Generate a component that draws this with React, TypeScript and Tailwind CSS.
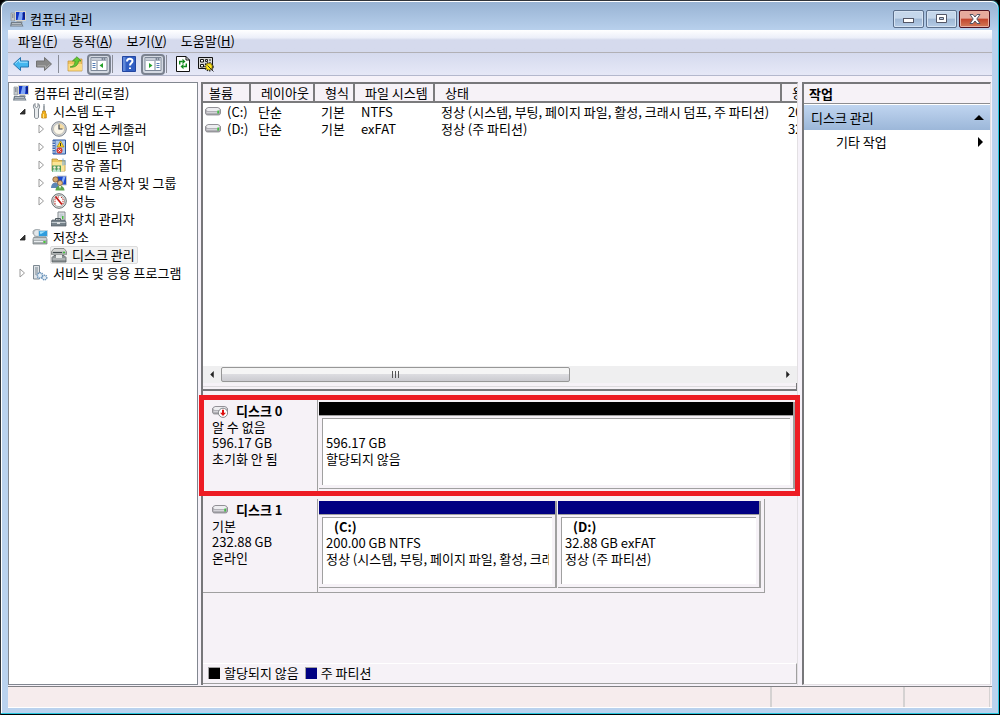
import type { ReactNode } from 'react'
import clsx from 'clsx'

function Icon({ children, className }: { children: ReactNode; className?: string }) {
  return (
    <svg viewBox="0 0 16 16" className={clsx('size-4 shrink-0', className)} aria-hidden>
      {children}
    </svg>
  )
}

function ComputerIcon() {
  return (
    <Icon>
      <path d="M5 0h11v10H5z" fill="#d9d6cc" />
      <path d="M6 1h9v8H6z" fill="#1237c4" />
      <path d="M9.500 1h3.500l-1 8H7.500z" fill="#7fa5f5" />
      <path d="M12.500 2H15v6h-1.500z" fill="#0b1f8c" />
      <path d="M1 2h3.500v8H1z" fill="#c3c8cd" stroke="#8b9299" strokeWidth=".7" />
      <path d="M2 4h1.500M2 6h1.500" stroke="#5d666e" />
      <path d="M7 10h5l1 2H5z" fill="#a1a7ac" />
      <path d="M1 11h10.500l2 4.500H0z" fill="#717d88" />
      <path d="M2 12.500h9M1.500 14.200h10.500" stroke="#c9d0d6" strokeWidth=".8" />
    </Icon>
  )
}

function ToolsIcon() {
  return (
    <Icon>
      <path d="M3 .5v3l1.500 1L6 3.500v-3c2 1 2 4.500.5 5.500V14c0 2-4 2-4 0V6C1 5 1 1.500 3 .5z" fill="#e8ebed" stroke="#737c83" strokeWidth=".9" />
      <path d="M12 1v7" stroke="#8a9299" strokeWidth="1.600" />
      <path d="M11 1h2v2h-2z" fill="#b8bec3" />
      <path d="M10.500 8h3v2l.8 1v4h-4.600v-4l.8-1z" fill="#f3b21a" stroke="#b87d08" strokeWidth=".7" />
      <path d="M11.500 11v4" stroke="#ffe28a" />
    </Icon>
  )
}

function ClockIcon() {
  return (
    <Icon>
      <circle cx="8" cy="8" r="7.300" fill="#d3d6da" stroke="#80868d" />
      <circle cx="8" cy="8" r="5.500" fill="#fbf6e8" stroke="#a9a69b" strokeWidth=".6" />
      <path d="M8 8V2.600A5.400 5.400 0 0 1 13.400 8z" fill="#f5dca3" />
      <path d="M8 3.500V8h3.500" fill="none" stroke="#434a55" strokeWidth="1.200" />
    </Icon>
  )
}

function EventIcon() {
  return (
    <Icon>
      <path d="M2 1h12.500v14H2z" fill="#a9c6ea" stroke="#2d559c" />
      <path d="M2 1h2.500v14H2z" fill="#3e6bb5" />
      <path d="M1 3h3M1 5.500h3M1 8h3M1 10.500h3M1 13h3" stroke="#d9dee5" />
      <path d="m9.500 2 3.500 6H6z" fill="#ffd92e" stroke="#a98500" strokeWidth=".7" />
      <path d="M9.500 4v3" stroke="#333" />
      <circle cx="8.500" cy="11.500" r="3" fill="#d93a32" />
      <path d="m7.400 10.400 2.200 2.200m0-2.200-2.200 2.200" stroke="#fff" />
    </Icon>
  )
}

function SharedFolderIcon() {
  return (
    <Icon>
      <path d="M1 2h5l1.500 1.500H14V14H1z" fill="#ecc75d" stroke="#b08d35" strokeWidth=".8" />
      <path d="M1.500 5h12v9h-12z" fill="#fbe596" />
      <path d="M1 8.500h9V15H1z" fill="#4f9a5a" />
      <circle cx="3.500" cy="10.500" r="1.300" fill="#f8efd8" />
      <circle cx="7.500" cy="10.500" r="1.300" fill="#f8efd8" />
      <path d="M1.500 15c0-4 4-4 4 0M5.500 15c0-4 4-4 4 0" fill="#bfe3d0" />
      <path d="M12 1.500v7M14 3v5" stroke="#6fa6dc" />
    </Icon>
  )
}

function UsersIcon() {
  return (
    <Icon>
      <path d="M6 1h9.500v9H6z" fill="#1c49ca" stroke="#c9cac8" />
      <path d="M12 1.500h2.500L12 9h-2z" fill="#8cb0fa" />
      <circle cx="4.500" cy="4.500" r="2.700" fill="#d7a56b" stroke="#6d4a27" strokeWidth=".7" />
      <path d="M0 13c0-7 8-7 8 0z" fill="#5d86b5" />
      <circle cx="9" cy="8" r="2.500" fill="#e7bd88" stroke="#7d5528" strokeWidth=".7" />
      <path d="M4.500 15.500c0-6.500 9-6.500 9 0z" fill="#5ba64c" />
      <path d="m8 11 1 3 1-3z" fill="#fff" />
    </Icon>
  )
}

function PerformanceIcon() {
  return (
    <Icon>
      <circle cx="8" cy="8" r="7.300" fill="#e5e5e2" stroke="#666d70" />
      <circle cx="8" cy="8" r="5.600" fill="#fff" stroke="#939896" strokeWidth=".8" />
      <path d="M4 11.500V6l2-2h2M10 4l2 2v5" fill="none" stroke="#c52d24" strokeDasharray="1.500 .8" />
      <path d="m4.500 3.500 6.500 8" stroke="#c21b18" strokeWidth="1.800" />
    </Icon>
  )
}

function DeviceIcon() {
  return (
    <Icon>
      <path d="M7 1h7v9H7z" fill="#e5e7e8" stroke="#81888d" />
      <path d="M8.500 2.500h4v4h-4z" fill="#c1cbd2" />
      <path d="M11 5h1.500v3H11z" fill="#4bbb44" />
      <path d="M4.500 9V7.500h5V9" fill="none" stroke="#4f5a60" />
      <path d="M1 9h12.500l1.500 2v4H0v-4z" fill="#77838b" stroke="#4e5860" strokeWidth=".7" />
      <path d="M.5 11.500h14" stroke="#c1c9ce" />
      <path d="M6 11h3v2H6z" fill="#dce0e2" />
    </Icon>
  )
}

function StorageIcon() {
  return (
    <Icon>
      <path d="M1 2 3 .8h5L7 5H1z" fill="#d1d7da" stroke="#8c9498" strokeWidth=".7" />
      <circle cx="5" cy="4" r="3.500" fill="#e3e7ea" stroke="#8d969c" strokeWidth=".7" />
      <path d="M6.500 1.500h9v6h-9z" fill="#2f9cdd" stroke="#ccd5db" strokeWidth=".8" />
      <path d="m7.500 2.500 6-.3-5 3z" fill="#9fe2ff" />
      <path d="M2 8h12l1 2v5H1v-5z" fill="#aab0b3" stroke="#6e7679" strokeWidth=".7" />
      <path d="M1.500 10h13M2 12.500h9" stroke="#e9edef" />
      <path d="M11.500 12h2v2h-2z" fill="#48cc38" />
    </Icon>
  )
}

function DiskManagementIcon() {
  return (
    <Icon>
      <path d="M3 1.500h10l2.500 3v3H.5v-3z" fill="#d3d4d2" stroke="#777b7a" strokeWidth=".8" />
      <path d="M1 4.500h14v3H1z" fill="#aeb2b2" />
      <path d="M2 5.500h9" stroke="#41494c" />
      <path d="M3 8.500h10l2 2v4.500H1v-4.500z" fill="#8c9294" stroke="#555d60" strokeWidth=".8" />
      <path d="M5 8h6v3H5z" fill="#e7e9e8" />
      <path d="M1.500 12h13" stroke="#cfd2d3" />
      <path d="M12 5.500h2" stroke="#42be3c" strokeWidth="1.300" />
    </Icon>
  )
}

function ServicesIcon() {
  return (
    <Icon>
      <path d="M1.500.5h6v13.500h-6z" fill="#dfe3e7" stroke="#7d8992" />
      <path d="M3 3h3M3 5h3M3 7h3M3 9h3" stroke="#788792" />
      <circle cx="8" cy="10.500" r="2.700" fill="#e4edf5" stroke="#6a93b9" strokeWidth="1.600" strokeDasharray="1.300 .7" />
      <circle cx="12.500" cy="12.500" r="2.300" fill="#e4edf5" stroke="#6a93b9" strokeWidth="1.500" strokeDasharray="1.200 .6" />
    </Icon>
  )
}

function DriveIcon({ warning }: { warning?: boolean }) {
  return (
    <Icon>
      <path d="M.5 6C.5 4.500 2.500 3.500 4 3.500h8c1.500 0 3.500 1 3.500 2.500v3c0 1.300-1 2-2 2h-11c-1 0-2-.7-2-2z" fill="#aaa9ae" stroke="#77767c" strokeWidth=".7" />
      <path d="M1.200 5.800C1.700 4.500 3 4 4 4h8c1 0 2.300.5 2.800 1.800L13.500 7h-11z" fill="#ededf0" />
      <path d="M1.500 8.500h10.500" stroke="#d4d3d8" strokeWidth="1.400" />
      {warning ? (
        <>
          <circle cx="11" cy="9.800" r="4.600" fill="#fff" stroke="#85868a" />
          <path d="M10 6.700h2v3h2l-3 3.300-3-3.300h2z" fill="#dd1010" />
        </>
      ) : (
        <path d="M12.500 6.500h1.300v3h-1.300z" fill="#25cb26" />
      )}
    </Icon>
  )
}

function ArrowIcon({ forward }: { forward?: boolean }) {
  return (
    <Icon className={clsx(forward && 'rotate-180')}>
      <path
        d="M.5 8 7.500 1.500v3.500h8v6h-8v3.500z"
        fill={forward ? '#888888' : '#43b6ef'}
        stroke={forward ? '#737373' : '#2774ae'}
        strokeLinejoin="round"
      />
      <path d="M2.300 7.500 6.500 3.800v2.400h8" fill="none" stroke={forward ? '#adadad' : '#a4e2ff'} />
    </Icon>
  )
}

function UpFolderIcon() {
  return (
    <Icon>
      <path d="M1 5h5l1.500-2H15v12H1z" fill="#efc461" stroke="#c29138" strokeWidth=".7" />
      <path d="M1.500 8H15v6.500H1.500z" fill="#fbdc86" />
      <path d="M3 11c4-1 5-3 5-6H5.500L10 .7 14 5h-2.500c0 4-4 7-8.500 6z" fill="#65c832" stroke="#3a8d22" strokeWidth=".7" />
    </Icon>
  )
}

function PaneIcon({ right }: { right?: boolean }) {
  return (
    <svg viewBox="0 0 18 16" className="h-4 w-[18px]" aria-hidden>
      <path d="M1 1.500h16v13H1z" fill="#fff" stroke="#7d8797" />
      <path d="M1.500 2h15v3h-15z" fill="#a8b0bf" />
      <path d="M2 3h9" stroke="#e5e9f0" />
      <path d="M12 3h1M14 3h1" stroke="#4c5665" />
      <path d={right ? 'M11 5v9' : 'M7 5v9'} stroke="#7d8797" />
      <path d={right ? 'M12.500 7.500h3M12.500 9.500h3M12.500 11.500h3' : 'M2.500 7.500h3M2.500 9.500h3M2.500 11.500h3'} stroke="#527ab4" />
      <path d={right ? 'M5 7v5l3.500-2.500z' : 'M13 7v5L9.500 9.500z'} fill="#25a22b" />
    </svg>
  )
}

function HelpIcon() {
  return (
    <Icon>
      <path d="M1.500.5h13v15h-13z" fill="#315ec3" stroke="#2346a1" />
      <path d="M2 1h2.500v14H2z" fill="#6189d9" />
      <path d="M6 5.500C6 2 11.500 2 11.500 5c0 2-2.500 2.200-2.500 4.500M9 11.500V13" fill="none" stroke="#fff" strokeWidth="2" />
    </Icon>
  )
}

function RefreshIcon() {
  return (
    <Icon>
      <path d="M1.500.5h9.500l3.500 3.500v11.500h-13z" fill="#fff" stroke="#111" />
      <path d="M11 .5V4h3.500" fill="none" stroke="#111" />
      <path d="M4.700 8.500V5.500h3M11.300 7.500v3h-3" fill="none" stroke="#108b1d" strokeWidth="1.400" />
      <path d="M7.500 2.800v5.400l3-2.700zM8.500 7.800v5.400l-3-2.700z" fill="#108b1d" />
    </Icon>
  )
}

function SettingsIcon() {
  return (
    <Icon>
      <path d="M.5 1.500h14v11H.5z" fill="#d9d9d9" stroke="#111" />
      <path d="M2.500 3.500h3v2.500h-3zM2.500 8.500h3V11h-3z" fill="#fff" stroke="#111" />
      <path d="M7.500 3.500h2v2h-2zM11 4h2M7 8h2" fill="none" stroke="#222" />
      <circle cx="11" cy="10.700" r="3.600" fill="#ffe818" stroke="#222" strokeWidth="2.300" strokeDasharray="1.200 .9" />
      <circle cx="11" cy="10.700" r="3.200" fill="#ffe61c" stroke="#8d7910" strokeWidth=".7" />
      <path d="m9.500 9.500 1.500 1.500 4.500 4.500" stroke="#333" />
    </Icon>
  )
}

function MenuItem({ label, hotkey }: { label: string; hotkey: string }) {
  return (
    <button type="button" className="px-[7px]">
      {label}(<u>{hotkey}</u>)
    </button>
  )
}

function ToolButton({ label, pressed, children }: { label: string; pressed?: boolean; children: ReactNode }) {
  return (
    <button
      type="button"
      aria-label={label}
      aria-pressed={pressed}
      className={clsx(
        'flex h-[21px] items-center justify-center',
        pressed ? 'mx-px w-6 rounded-[4px] border-2 border-[#7b8290] bg-[#d4d9e2]' : 'w-[23px]',
      )}
    >
      {children}
    </button>
  )
}

function ToolSeparator() {
  return <div className="mr-1 h-[18px] w-px bg-[#8a8d98]" />
}

function Expander({ open }: { open?: boolean }) {
  return (
    <svg viewBox="0 0 10 10" className="size-[10px] shrink-0" aria-hidden>
      {open ? (
        <path d="M8 3v5H3z" fill="#333" stroke="#222" strokeWidth=".8" />
      ) : (
        <path d="M3 1v8l4.500-4z" fill="#fff" stroke="#9a9a9a" />
      )}
    </svg>
  )
}

interface TreeItemProps {
  label: string
  icon: ReactNode
  level?: 1 | 2
  state?: 'open' | 'closed'
  selected?: boolean
}

function TreeItem({ label, icon, level, state, selected }: TreeItemProps) {
  return (
    <li
      role="treeitem"
      aria-expanded={state && state === 'open'}
      aria-selected={!!selected}
      className={clsx('flex h-[18px] items-center', !level && 'pl-[3px]', level === 1 && 'pl-2', level === 2 && 'pl-[27px]')}
    >
      {level && <span className="w-[14px] shrink-0">{state && <Expander open={state === 'open'} />}</span>}
      <span
        className={clsx(
          'flex items-center gap-[5px] whitespace-nowrap rounded-[2px] border pr-[2px]',
          selected ? 'border-[#dcdcdc] bg-[#f2f2f2]' : 'border-transparent',
        )}
      >
        {icon}
        <span className="leading-4">{label}</span>
      </span>
    </li>
  )
}

const volumes = [
  { name: '(C:)', fs: 'NTFS', status: '정상 (시스템, 부팅, 페이지 파일, 활성, 크래시 덤프, 주 파티션)', size: '200.00 GB' },
  { name: '(D:)', fs: 'exFAT', status: '정상 (주 파티션)', size: '32.88 GB' },
]

const columns = ['볼륨', '레이아웃', '형식', '파일 시스템', '상태', '용량']

function VolumeTable() {
  return (
    <table className="w-[640px] table-fixed border-separate border-spacing-0 whitespace-nowrap">
      <colgroup>
        <col className="w-12" />
        <col className="w-16" />
        <col className="w-10" />
        <col className="w-20" />
        <col className="w-[347px]" />
        <col className="w-[61px]" />
      </colgroup>
      <thead>
        <tr className="bg-[#f6f2f7]">
          {columns.map((column, i) => (
            <th
              key={column}
              className={clsx(
                'h-[19px] border-b-2 border-r-2 border-[#7b7b7d] pb-0 pr-0 pt-px text-left font-normal leading-4',
                i === 0 ? 'pl-[6px]' : 'pl-[10px]',
              )}
            >
              {column}
            </th>
          ))}
        </tr>
      </thead>
      <tbody>
        {volumes.map((volume) => (
          <tr key={volume.name} className="h-[17px] leading-[17px]">
            <td className="p-0">
              <span className="flex items-center gap-[6px] pl-[2px]">
                <DriveIcon />
                {volume.name}
              </span>
            </td>
            <td className="py-0 pl-[7px] pr-0">단순</td>
            <td className="py-0 pl-[6px] pr-0">기본</td>
            <td className="py-0 pl-[6px] pr-0">{volume.fs}</td>
            <td className="py-0 pl-[6px] pr-0">{volume.status}</td>
            <td className="py-0 pl-[6px] pr-0">{volume.size}</td>
          </tr>
        ))}
      </tbody>
    </table>
  )
}

function HorizontalScrollbar() {
  return (
    <div className="flex h-[17px] items-center bg-[#efeff0]">
      <button type="button" aria-label="왼쪽으로" className="flex w-[18px] justify-center">
        <svg viewBox="0 0 4 8" className="h-[7px] w-1" aria-hidden>
          <path d="M4 0v8L0 4z" fill="#222" />
        </svg>
      </button>
      <div className="flex-1">
        <div className="flex h-[15px] w-5/8 items-center justify-center gap-[2px] rounded-[2px] border border-[#979797] bg-linear-to-b from-[#f5f5f5] from-45% via-[#dcdce0] via-50% to-[#cbcbd0]">
          <span className="h-[7px] w-px bg-[#555]" />
          <span className="h-[7px] w-px bg-[#555]" />
          <span className="h-[7px] w-px bg-[#555]" />
        </div>
      </div>
      <button type="button" aria-label="오른쪽으로" className="flex w-[18px] justify-center">
        <svg viewBox="0 0 4 8" className="h-[7px] w-1" aria-hidden>
          <path d="M0 0v8l4-4z" fill="#222" />
        </svg>
      </button>
    </div>
  )
}

function Partition({ color, className, children }: { color: string; className: string; children: ReactNode }) {
  return (
    <div className={clsx('flex flex-col border-b border-r-2 border-[#a0a0a0]', className)}>
      <div className={clsx('h-[13px] shrink-0', color)} />
      <div className="flex min-h-0 flex-1 border-t border-[#a0a0a0] p-[3px] pt-[2px]">
        <div className="flex min-w-0 flex-1 flex-col border-l border-t border-[#a0a0a0] bg-white px-[3px]">
          <div className="overflow-hidden whitespace-nowrap leading-4">{children}</div>
        </div>
      </div>
    </div>
  )
}

interface DiskRowProps {
  name: string
  lines: string[]
  warning?: boolean
  highlighted?: boolean
  children: ReactNode
}

function DiskRow({ name, lines, warning, highlighted, children }: DiskRowProps) {
  return (
    <section className="relative flex h-[94px]">
      <div className="w-[114px] shrink-0 border-b border-[#a0a0a0] pl-[9px] pt-[3px] leading-4">
        <h2 className="flex items-center gap-2 font-bold">
          <DriveIcon warning={warning} />
          {name}
        </h2>
        {lines.map((line) => (
          <p key={line}>{line}</p>
        ))}
      </div>
      {children}
      {highlighted && (
        <div className="pointer-events-none absolute -inset-x-1 -bottom-[2px] -top-[5px] border-5 border-[#ed1c24]" />
      )}
    </section>
  )
}

function DiskView() {
  return (
    <div className="flex flex-1 flex-col gap-[5px] bg-[#f6f2f7] pr-px pt-[9px]">
      <DiskRow name="디스크 0" lines={['알 수 없음', '596.17 GB', '초기화 안 됨']} warning highlighted>
        <div className="flex flex-1 border-b border-l border-white border-l-[#a0a0a0] pb-1 pl-px pr-px pt-[2px]">
          <Partition color="bg-black" className="flex-1">
            <p className="pt-4">596.17 GB</p>
            <p>할당되지 않음</p>
          </Partition>
        </div>
      </DiskRow>
      <DiskRow name="디스크 1" lines={['기본', '232.88 GB', '온라인']}>
        <div className="flex w-[448px] border-b border-l border-r border-[#a0a0a0] pb-1 pl-px pr-[3px] pt-[2px]">
          <Partition color="bg-[#000082]" className="w-[238px]">
            <p className="pl-2 pt-px font-semibold">(C:)</p>
            <p>200.00 GB NTFS</p>
            <p>{volumes[0].status}</p>
          </Partition>
          <Partition color="bg-[#000082]" className="ml-px flex-1">
            <p className="pl-2 pt-px font-semibold">(D:)</p>
            <p>32.88 GB exFAT</p>
            <p>{volumes[1].status}</p>
          </Partition>
        </div>
      </DiskRow>
    </div>
  )
}

const windowButton =
  'flex h-[18px] w-[31px] items-center justify-center rounded-[2px] border border-[#5b6f8b] bg-linear-to-b from-[#c5d7eb] from-45% via-[#9fb8d5] via-50% to-[#b5cce6] shadow-[inset_0_0_0_1px_#d5e3f3]'

function TitleBar() {
  return (
    <header className="flex h-7 shrink-0 items-center px-[2px] pt-[5px]">
      <ComputerIcon />
      <h1 className="pl-1 leading-4">컴퓨터 관리</h1>
      <div className="ml-auto flex gap-[2px]">
        <button type="button" aria-label="최소화" className={windowButton}>
          <svg viewBox="0 0 11 5" className="mt-1 h-[5px] w-[11px]" aria-hidden>
            <rect x=".5" y=".5" width="10" height="4" fill="#fff" stroke="#535666" />
          </svg>
        </button>
        <button type="button" aria-label="최대화" className={windowButton}>
          <svg viewBox="0 0 11 9" className="h-[9px] w-[11px]" aria-hidden>
            <path d="M.5.500h10v8H.5zM3.500 3.500v2h4v-2z" fill="#fff" stroke="#535666" fillRule="evenodd" />
          </svg>
        </button>
        <button
          type="button"
          aria-label="닫기"
          className="flex h-[18px] w-[31px] items-center justify-center rounded-[2px] border border-[#4f1120] bg-linear-to-b from-[#e6a99c] from-45% via-[#c2432c] via-50% to-[#d27958] shadow-[inset_0_0_0_1px_#e9aea0]"
        >
          <svg viewBox="0 0 12 10" className="h-[10px] w-3" aria-hidden>
            <path d="M1 .5h3L6 3 8 .5h3L7.800 5 11 9.500H8L6 7 4 9.500H1L4.200 5z" fill="#fff" stroke="#535666" />
          </svg>
        </button>
      </div>
    </header>
  )
}

function Toolbar() {
  return (
    <div className="flex h-[23px] shrink-0 items-center border-b border-[#b4b8cd] bg-linear-to-b from-[#d5daee] to-[#e6e8f7] pl-px">
      <div className="mr-[3px] flex">
        <ToolButton label="뒤로">
          <ArrowIcon />
        </ToolButton>
        <ToolButton label="앞으로">
          <ArrowIcon forward />
        </ToolButton>
      </div>
      <ToolSeparator />
      <ToolButton label="한 수준 위로">
        <UpFolderIcon />
      </ToolButton>
      <ToolButton label="콘솔 트리 표시/숨기기" pressed>
        <PaneIcon />
      </ToolButton>
      <ToolSeparator />
      <ToolButton label="도움말">
        <HelpIcon />
      </ToolButton>
      <ToolButton label="작업 창 표시/숨기기" pressed>
        <PaneIcon right />
      </ToolButton>
      <ToolSeparator />
      <ToolButton label="새로 고침">
        <RefreshIcon />
      </ToolButton>
      <ToolButton label="설정">
        <SettingsIcon />
      </ToolButton>
    </div>
  )
}

function ConsoleTree() {
  return (
    <nav className="w-[190px] shrink-0 overflow-hidden border border-[#828790] bg-white pt-px">
      <ul role="tree">
        <TreeItem label="컴퓨터 관리(로컬)" icon={<ComputerIcon />} />
        <TreeItem level={1} state="open" label="시스템 도구" icon={<ToolsIcon />} />
        <TreeItem level={2} state="closed" label="작업 스케줄러" icon={<ClockIcon />} />
        <TreeItem level={2} state="closed" label="이벤트 뷰어" icon={<EventIcon />} />
        <TreeItem level={2} state="closed" label="공유 폴더" icon={<SharedFolderIcon />} />
        <TreeItem level={2} state="closed" label="로컬 사용자 및 그룹" icon={<UsersIcon />} />
        <TreeItem level={2} state="closed" label="성능" icon={<PerformanceIcon />} />
        <TreeItem level={2} label="장치 관리자" icon={<DeviceIcon />} />
        <TreeItem level={1} state="open" label="저장소" icon={<StorageIcon />} />
        <TreeItem level={2} label="디스크 관리" icon={<DiskManagementIcon />} selected />
        <TreeItem level={1} state="closed" label="서비스 및 응용 프로그램" icon={<ServicesIcon />} />
      </ul>
    </nav>
  )
}

function ActionsPane() {
  return (
    <aside className="flex w-[189px] shrink-0 flex-col border-2 border-b border-r border-[#e3e0e3] border-l-[#77777a] border-t-[#77777a] bg-white">
      <h2 className="h-5 border-b border-[#8d8d90] bg-[#f6f2f7] pl-[5px] font-bold leading-5">작업</h2>
      <button
        type="button"
        className="mt-px flex h-[25px] items-center justify-between bg-linear-to-b from-[#c0d5f0] to-[#9cb7d9] pl-[7px] pr-[6px]"
      >
        디스크 관리
        <svg viewBox="0 0 10 5" className="h-[5px] w-[10px]" aria-hidden>
          <path d="M5 0l5 5H0z" />
        </svg>
      </button>
      <button type="button" className="flex h-6 items-center justify-between pl-8 pr-[7px]">
        기타 작업
        <svg viewBox="0 0 5 10" className="h-[10px] w-[5px]" aria-hidden>
          <path d="M0 0v10l5-5z" />
        </svg>
      </button>
    </aside>
  )
}

export default function App() {
  return (
    <div className="h-screen bg-black font-['Noto_Sans_CJK_KR',sans-serif] text-[13px] text-black">
      <div className="flex h-full flex-col rounded-t-lg border border-[#30343a] border-b-black border-r-black bg-[#27c5dd] pb-px pr-px">
        <div className="flex min-h-0 flex-1 flex-col rounded-t-[7px] border-l border-t border-white bg-[#bad2ee] bg-linear-to-b from-[#98b3d3] to-[#bad2ee] to-[30px] px-[6px] pb-[5px]">
          <TitleBar />
          <nav className="flex h-[22px] shrink-0 items-center bg-linear-to-b from-white via-[#eceff9] via-35% to-[#d5daed] to-45% pl-[3px]">
            <MenuItem label="파일" hotkey="F" />
            <MenuItem label="동작" hotkey="A" />
            <MenuItem label="보기" hotkey="V" />
            <MenuItem label="도움말" hotkey="H" />
          </nav>
          <div className="h-px shrink-0 bg-[#b1b0b5]" />
          <Toolbar />
          <main className="flex min-h-0 flex-1 bg-[#f6f2f9] pb-px pr-px pt-[6px]">
            <ConsoleTree />
            <div className="ml-[3px] mr-1 flex min-w-0 flex-1 flex-col border-l-2 border-r border-t-2 border-[#77777a] border-r-[#e3e0e3] pb-px">
              <div className="flex h-[299px] flex-col bg-white">
                <div className="flex-1 overflow-hidden">
                  <VolumeTable />
                </div>
                <HorizontalScrollbar />
              </div>
              <div className="h-2 border-b-2 border-r border-[#77777a] bg-[#f6f2f7] pt-[3px]">
                <div className="h-px bg-[#dcdadd]" />
              </div>
              <DiskView />
              <footer className="flex h-[21px] shrink-0 items-center border-b border-r border-t border-[#a0a0a0] border-t-white bg-[#f6f2f7] pb-px pl-[5px]">
                <span className="mr-1 size-3 border-l border-t border-[#a0a0a0] bg-black" />
                할당되지 않음
                <span className="ml-[6px] mr-1 size-3 border-l border-t border-[#a0a0a0] bg-[#000082]" />
                주 파티션
              </footer>
            </div>
            <ActionsPane />
          </main>
          <footer className="flex h-[22px] shrink-0 border-y border-t-[#808084] border-b-white bg-[#f6eced]">
            <div className="flex-1 border-r-2 border-[#d5d2d2]" />
            <div className="w-[133px] border-r-2 border-[#d5d2d2]" />
            <div className="w-[85px] border-r border-[#d5d2d2]" />
            <div className="w-[2px]" />
          </footer>
        </div>
      </div>
    </div>
  )
}
